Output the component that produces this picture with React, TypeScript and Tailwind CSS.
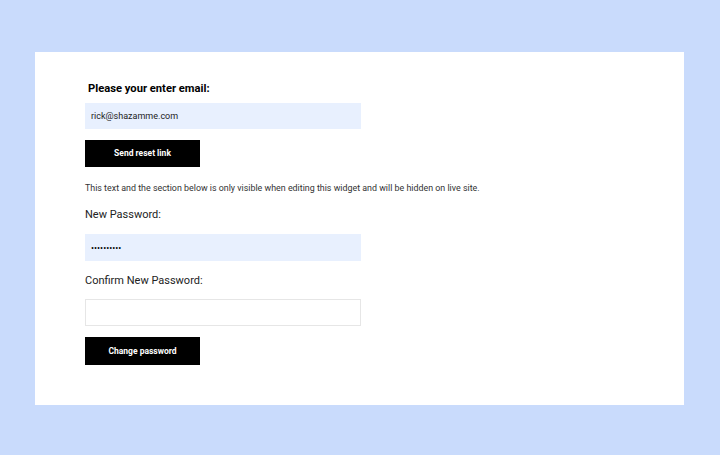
export default function App() {
  return (
    <div className="min-h-screen w-full bg-[#c9dbfc] pt-[52px] pb-[50px] pl-[35px] pr-[36px] font-['Roboto',sans-serif]">
      <div className="bg-white pl-[50px] pt-[30px] pb-[39px] h-[353px]">
        <h2 className="ml-[3px] text-[11.2px] leading-[14px] font-bold text-black">
          Please your enter email:
        </h2>
        <input
          type="email"
          defaultValue="rick@shazamme.com"
          className="mt-[7px] block h-[26px] w-[276px] bg-[#e8f0fe] px-[6px] text-[9px] text-[#222] outline-none"
        />
        <button className="mt-[11px] block h-[27px] w-[115px] bg-black text-[8.5px] font-bold text-white">
          Send reset link
        </button>
        <p className="mt-[15px] text-[8.9px] leading-[12px] text-[#333]">
          This text and the section below is only visible when editing this widget and will be hidden on live site.
        </p>
        <label className="mt-[13px] block text-[11px] leading-[16px] text-[#222]">
          New Password:
        </label>
        <input
          type="password"
          defaultValue="password12"
          className="mt-[11px] block h-[27px] w-[276px] bg-[#e8f0fe] px-[6px] text-[9px] text-black outline-none"
        />
        <label className="mt-[12px] block text-[11px] leading-[16px] text-[#222]">
          Confirm New Password:
        </label>
        <input
          type="password"
          className="mt-[10px] block h-[27px] w-[276px] border border-[#e6e6e6] bg-white px-[6px] text-[9px] outline-none"
        />
        <button className="mt-[11px] block h-[28px] w-[115px] bg-black text-[8.5px] font-bold text-white">
          Change password
        </button>
      </div>
    </div>
  );
}
